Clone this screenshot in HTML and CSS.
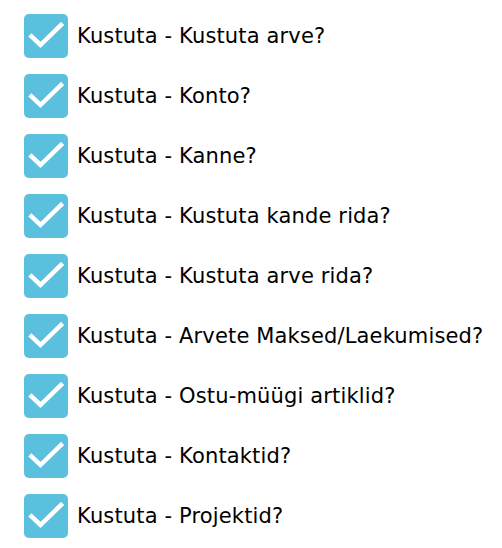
FILE: index.html
```html
<!DOCTYPE html>
<html>
<head>
<meta charset="utf-8">
<link rel="stylesheet" href="styles.css">
</head>
<body>
<ul class="list">
  <li class="row"><span class="box"><svg viewBox="0 0 44 44" width="44" height="44"><polyline points="7.5,22.5 16.5,31 37,11" /></svg></span><span class="label">Kustuta - Kustuta arve?</span></li>
  <li class="row"><span class="box"><svg viewBox="0 0 44 44" width="44" height="44"><polyline points="7.5,22.5 16.5,31 37,11" /></svg></span><span class="label">Kustuta - Konto?</span></li>
  <li class="row"><span class="box"><svg viewBox="0 0 44 44" width="44" height="44"><polyline points="7.5,22.5 16.5,31 37,11" /></svg></span><span class="label">Kustuta - Kanne?</span></li>
  <li class="row"><span class="box"><svg viewBox="0 0 44 44" width="44" height="44"><polyline points="7.5,22.5 16.5,31 37,11" /></svg></span><span class="label">Kustuta - Kustuta kande rida?</span></li>
  <li class="row"><span class="box"><svg viewBox="0 0 44 44" width="44" height="44"><polyline points="7.5,22.5 16.5,31 37,11" /></svg></span><span class="label">Kustuta - Kustuta arve rida?</span></li>
  <li class="row"><span class="box"><svg viewBox="0 0 44 44" width="44" height="44"><polyline points="7.5,22.5 16.5,31 37,11" /></svg></span><span class="label">Kustuta - Arvete Maksed/Laekumised?</span></li>
  <li class="row"><span class="box"><svg viewBox="0 0 44 44" width="44" height="44"><polyline points="7.5,22.5 16.5,31 37,11" /></svg></span><span class="label">Kustuta - Ostu-müügi artiklid?</span></li>
  <li class="row"><span class="box"><svg viewBox="0 0 44 44" width="44" height="44"><polyline points="7.5,22.5 16.5,31 37,11" /></svg></span><span class="label">Kustuta - Kontaktid?</span></li>
  <li class="row"><span class="box"><svg viewBox="0 0 44 44" width="44" height="44"><polyline points="7.5,22.5 16.5,31 37,11" /></svg></span><span class="label">Kustuta - Projektid?</span></li>
</ul>
</body>
</html>
```
FILE: styles.css
```css
html, body {
  margin: 0;
  padding: 0;
  background: #ffffff;
}
.list {
  list-style: none;
  margin: 0;
  padding: 14px 0 0 24px;
  display: flex;
  flex-direction: column;
  gap: 16px;
}
.row {
  display: flex;
  align-items: center;
  gap: 9px;
  height: 44px;
}
.box {
  width: 44px;
  height: 44px;
  border-radius: 5px;
  background: #5bc0de;
  flex: none;
  display: block;
}
.box svg {
  display: block;
}
.box polyline {
  fill: none;
  stroke: #ffffff;
  stroke-width: 4.5;
  stroke-linecap: square;
  stroke-linejoin: miter;
}
.label {
  font-family: "DejaVu Sans", Verdana, sans-serif;
  font-size: 21px;
  color: #000000;
  letter-spacing: 0.15px;
}
```
